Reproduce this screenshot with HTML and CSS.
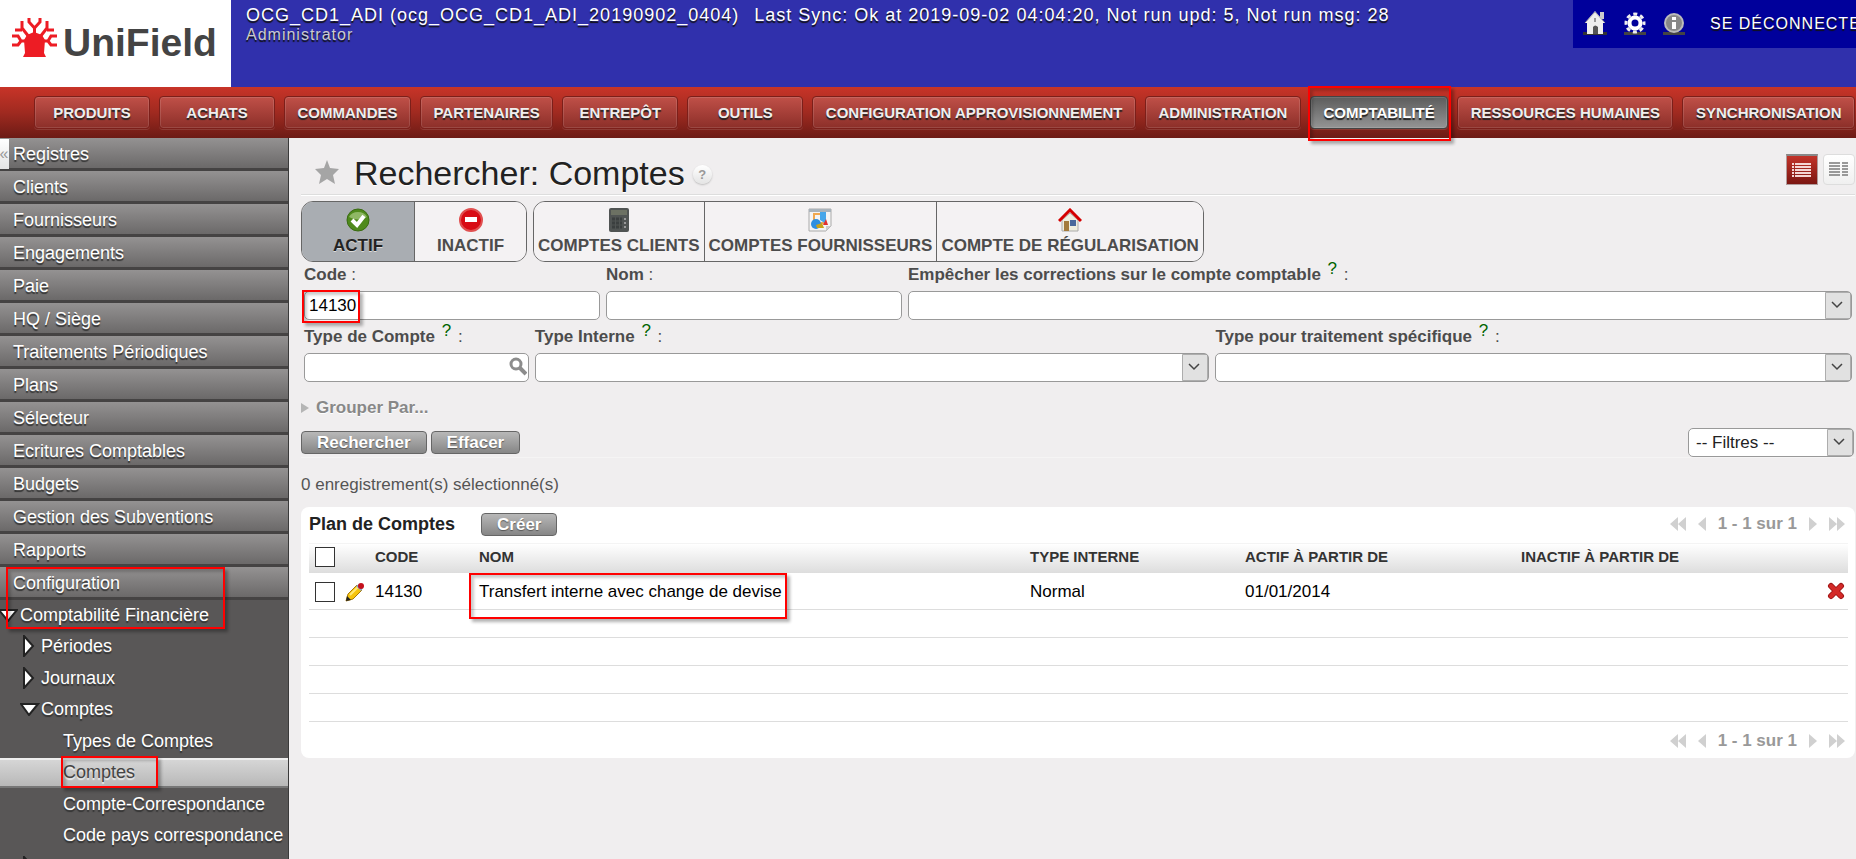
FILE: index.html
```
<!DOCTYPE html>
<html lang="fr">
<head>
    <meta charset="UTF-8">
    <meta name="viewport" content="width=device-width, initial-scale=1.0">
    <title>UniField - Comptes</title>
    <link rel="stylesheet" href="styles.css">
</head>
<body>

<header class="header">
    <a href="#" class="logo">
        <svg class="logo-tree" viewBox="0 0 45 40" width="45" height="40" aria-hidden="true">
            <path d="M12 22 L15 17 L22 14 L30 17 L33 22 L32 35 L34 39 H11 L13 35 Z" fill="#ed1c24"/>
            <g fill="none" stroke="#ed1c24" stroke-width="3">
                <path d="M22.5 16V9M17 0V4L22.5 10L28 4V0"/>
                <path d="M17 19L10 10V3M10 12L3 12"/>
                <path d="M28 19L35 10V3M35 12L42 12"/>
                <path d="M14 23H9L6 18H0M9 23L6 27H0"/>
                <path d="M31 23H36L39 18H45M36 23L39 27H45"/>
            </g>
        </svg>
        <span class="logo-text">UniField</span>
    </a>
    <div class="header-info">
        <div class="db-name"><span>OCG_CD1_ADI (ocg_OCG_CD1_ADI_20190902_0404)</span><span>Last Sync: Ok at 2019-09-02 04:04:20, Not run upd: 5, Not run msg: 28</span></div>
        <div class="user-name">Administrator</div>
    </div>
    <div class="user-menu">
        <a href="#" aria-label="Accueil">
            <svg viewBox="0 0 24 24" width="24" height="24">
                <path d="M0 21H24V24H0Z" fill="#333"/>
                <path d="M17 1H21V8H17Z" fill="#ccc"/>
                <path d="M12 0L22 12H20V23H4V12H2Z" fill="#eee"/>
                <path d="M2 12L12 1L22 12" fill="none" stroke="#aaa" stroke-width="1"/>
                <path d="M10 23V16Q12 13 15 16V23Z" fill="#555"/>
                <path d="M11 7H13V11H11Z" fill="#999"/>
            </svg>
        </a>
        <a href="#" aria-label="Préférences">
            <svg viewBox="0 0 22 24" width="22" height="24">
                <path d="M0 21H22V24H0Z" fill="#444"/>
                <circle cx="11" cy="12" r="5.5" fill="none" stroke="#fff" stroke-width="4"/>
                <circle cx="11" cy="12" r="9" fill="none" stroke="#eee" stroke-width="3" stroke-dasharray="4 3.07" stroke-dashoffset="2"/>
            </svg>
        </a>
        <a href="#" aria-label="À propos">
            <svg viewBox="0 0 22 24" width="22" height="24">
                <path d="M0 21H22V24H0Z" fill="#444"/>
                <circle cx="11" cy="12" r="9" fill="#888" stroke="#bbb" stroke-width="2"/>
                <path d="M9 6H13V9H9ZM9 11H13V18H9Z" fill="#fff"/>
            </svg>
        </a>
        <a href="#" class="logout">SE DÉCONNECTER</a>
    </div>
</header>

<nav class="main-nav">
    <a href="#" class="nav-item">PRODUITS</a>
    <a href="#" class="nav-item">ACHATS</a>
    <a href="#" class="nav-item">COMMANDES</a>
    <a href="#" class="nav-item">PARTENAIRES</a>
    <a href="#" class="nav-item">ENTREPÔT</a>
    <a href="#" class="nav-item">OUTILS</a>
    <a href="#" class="nav-item">CONFIGURATION APPROVISIONNEMENT</a>
    <a href="#" class="nav-item">ADMINISTRATION</a>
    <a href="#" class="nav-item active">COMPTABILITÉ<span class="mark mark-nav"></span></a>
    <a href="#" class="nav-item">RESSOURCES HUMAINES</a>
    <a href="#" class="nav-item">SYNCHRONISATION</a>
</nav>

<div class="page">
    <aside class="sidebar">
        <button type="button" class="collapse" aria-label="Réduire le menu">«</button>
        <a href="#" class="menu-item">Registres</a>
        <a href="#" class="menu-item">Clients</a>
        <a href="#" class="menu-item">Fournisseurs</a>
        <a href="#" class="menu-item">Engagements</a>
        <a href="#" class="menu-item">Paie</a>
        <a href="#" class="menu-item">HQ / Siège</a>
        <a href="#" class="menu-item">Traitements Périodiques</a>
        <a href="#" class="menu-item">Plans</a>
        <a href="#" class="menu-item">Sélecteur</a>
        <a href="#" class="menu-item">Ecritures Comptables</a>
        <a href="#" class="menu-item">Budgets</a>
        <a href="#" class="menu-item">Gestion des Subventions</a>
        <a href="#" class="menu-item">Rapports</a>
        <a href="#" class="menu-item marked">Configuration<span class="mark mark-config"></span></a>
        <div class="tree">
            <a href="#" class="tree-item level-1"><svg viewBox="0 0 20 14" width="20" height="14"><path d="M1 2H19L10 13Z" fill="#fff" stroke="#222" stroke-width="2"/></svg>Comptabilité Financière</a>
            <a href="#" class="tree-item level-2"><svg viewBox="0 0 20 22" width="20" height="22"><path d="M4 1V21L13 11Z" fill="#fff" stroke="#222" stroke-width="2"/></svg>Périodes</a>
            <a href="#" class="tree-item level-2"><svg viewBox="0 0 20 22" width="20" height="22"><path d="M4 1V21L13 11Z" fill="#fff" stroke="#222" stroke-width="2"/></svg>Journaux</a>
            <a href="#" class="tree-item level-2"><svg viewBox="0 0 20 14" width="20" height="14"><path d="M1 2H18L9 13Z" fill="#fff" stroke="#222" stroke-width="2"/></svg>Comptes</a>
            <a href="#" class="tree-item level-3">Types de Comptes</a>
            <a href="#" class="tree-item level-3 selected">Comptes<span class="mark mark-comptes"></span></a>
            <a href="#" class="tree-item level-3">Compte-Correspondance</a>
            <a href="#" class="tree-item level-3">Code pays correspondance</a>
            <a href="#" class="tree-item level-2" aria-label="Suite du menu"><svg viewBox="0 0 20 22" width="20" height="22"><path d="M4 1V21L13 11Z" fill="#fff" stroke="#222" stroke-width="2"/></svg></a>
        </div>
    </aside>

    <main class="content">
        <div class="title-bar">
            <svg class="star" viewBox="0 0 24 24" width="24" height="24" aria-hidden="true"><path d="M12 0L15 8L24 9L18 15L20 24L12 19L4 24L6 15L0 9L9 8Z" fill="#a5a5a5"/></svg>
            <h1>Rechercher: Comptes</h1>
            <a href="#" class="help">?</a>
            <div class="views">
                <button type="button" class="view active" aria-label="Liste">
                    <svg viewBox="0 0 20 16" width="20" height="16"><path d="M0 2H2M3 2H19M0 5H2M3 5H19M0 8H2M3 8H19M0 11H2M3 11H19M0 14H2M3 14H19" stroke="#f4d6d4" stroke-width="2"/></svg>
                </button>
                <button type="button" class="view" aria-label="Formulaire">
                    <svg viewBox="0 0 20 16" width="20" height="16"><path d="M0 2H11M13 2H19M0 5H11M13 5H19M0 8H11M13 8H19M0 11H11M13 11H19M0 14H11M13 14H19" stroke="#999" stroke-width="2"/></svg>
                </button>
            </div>
        </div>

        <form>
            <div class="toggles">
                <div class="toggle-group">
                    <button type="button" class="toggle status on">
                        <svg viewBox="0 0 24 24" width="24" height="24"><circle cx="12" cy="12" r="11" fill="#4f8a1c" stroke="#3a6b12" stroke-width="1"/><path d="M3 9A10 9 0 0 1 21 9Q12 14 3 9Z" fill="#8fb865"/><path d="M6 12L11 17L18 8" fill="none" stroke="#fff" stroke-width="4"/></svg>
                        ACTIF
                    </button>
                    <button type="button" class="toggle status">
                        <svg viewBox="0 0 24 24" width="24" height="24"><circle cx="12" cy="12" r="11" fill="#d80c14" stroke="#e05050" stroke-width="2"/><path d="M6 9H18V14H6Z" fill="#fff"/></svg>
                        INACTIF
                    </button>
                </div>
                <div class="toggle-group">
                    <button type="button" class="toggle">
                        <svg viewBox="0 0 24 24" width="24" height="24"><rect x="2" y="0" width="20" height="24" rx="2" fill="#505453"/><path d="M4 2H20V7H4Z" fill="#6c7163"/><path d="M5 11H15M5 15H15M5 19H15" stroke="#3b3f3f" stroke-width="3" stroke-dasharray="3 1"/><path d="M17 11H19M17 15H19M17 19H19" stroke="#999" stroke-width="2"/></svg>
                        COMPTES CLIENTS
                    </button>
                    <button type="button" class="toggle">
                        <svg viewBox="0 0 24 24" width="24" height="24"><path d="M1 1H23V18L18 23H1Z" fill="#f4f4f4" stroke="#aaa" stroke-width="1"/><path d="M1 1H23V4H1Z" fill="#a9b3bb"/><rect x="6" y="6" width="10" height="9" fill="none" stroke="#f0a850" stroke-width="2"/><path d="M12 4H18V16L12 12Z" fill="#46a6ea"/><circle cx="8" cy="16" r="5" fill="#2d8fe0"/><path d="M15 17L18 11L20 17Z" fill="#e03030"/><path d="M8 17L14 15L16 20H9Z" fill="#c9a21a"/><path d="M18 23V18H23Z" fill="#ccc"/></svg>
                        COMPTES FOURNISSEURS
                    </button>
                    <button type="button" class="toggle">
                        <svg viewBox="0 0 24 24" width="24" height="24"><path d="M4 12L12 5L20 12V23H4Z" fill="#eeeedf" stroke="#aaa" stroke-width="1"/><path d="M6 13H11V23H6Z" fill="#a37b3c"/><path d="M12 12H18V18H12Z" fill="#49699c"/><path d="M1 13L12 2L23 13" fill="none" stroke="#d40000" stroke-width="3"/></svg>
                        COMPTE DE RÉGULARISATION
                    </button>
                </div>
            </div>

            <div class="fields row-1">
                <div class="field marked">
                    <label for="code"><b>Code</b> :</label>
                    <input type="text" id="code" value="14130">
                    <span class="mark mark-code"></span>
                </div>
                <div class="field">
                    <label for="nom"><b>Nom</b> :</label>
                    <input type="text" id="nom">
                </div>
                <div class="field">
                    <label for="corrections"><b>Empêcher les corrections sur le compte comptable</b> <sup>?</sup> :</label>
                    <select id="corrections"><option></option></select>
                </div>
            </div>
            <div class="fields row-2">
                <div class="field">
                    <label for="type"><b>Type de Compte</b> <sup>?</sup> :</label>
                    <div class="search-box">
                        <input type="text" id="type">
                        <svg viewBox="0 0 18 20" width="18" height="20" aria-hidden="true"><circle cx="7" cy="8" r="5" fill="none" stroke="#8c8c8c" stroke-width="3"/><path d="M11 12L17 18" stroke="#8c8c8c" stroke-width="4"/></svg>
                    </div>
                </div>
                <div class="field">
                    <label for="interne"><b>Type Interne</b> <sup>?</sup> :</label>
                    <select id="interne"><option></option></select>
                </div>
                <div class="field">
                    <label for="specifique"><b>Type pour traitement spécifique</b> <sup>?</sup> :</label>
                    <select id="specifique"><option></option></select>
                </div>
            </div>

            <button type="button" class="group-by"><svg viewBox="0 0 8 10" width="8" height="10"><path d="M0 0L8 5L0 10Z" fill="#b5b5b5"/></svg>Grouper Par...</button>

            <div class="actions">
                <button type="button" class="button">Rechercher</button>
                <button type="button" class="button">Effacer</button>
                <select class="filters" aria-label="Filtres"><option>-- Filtres --</option></select>
            </div>
        </form>

        <p class="count">0 enregistrement(s) sélectionné(s)</p>

        <section class="panel">
            <div class="panel-head">
                <h2>Plan de Comptes</h2>
                <button type="button" class="button">Créer</button>
                <div class="pager">
                    <svg viewBox="0 0 16 14" width="16" height="14"><path d="M8 0V14L0 7ZM16 0V14L8 7Z"/></svg>
                    <svg viewBox="0 0 8 14" width="8" height="14"><path d="M8 0V14L0 7Z"/></svg>
                    <span>1 - 1 sur 1</span>
                    <svg viewBox="0 0 8 14" width="8" height="14"><path d="M0 0V14L8 7Z"/></svg>
                    <svg viewBox="0 0 16 14" width="16" height="14"><path d="M0 0V14L8 7ZM8 0V14L16 7Z"/></svg>
                </div>
            </div>
            <table class="grid">
                <thead>
                    <tr>
                        <th class="col-check"><input type="checkbox" aria-label="Tout sélectionner"></th>
                        <th class="col-edit"></th>
                        <th class="col-code">CODE</th>
                        <th class="col-nom">NOM</th>
                        <th class="col-type">TYPE INTERNE</th>
                        <th class="col-actif">ACTIF À PARTIR DE</th>
                        <th>INACTIF À PARTIR DE</th>
                        <th class="col-delete"></th>
                    </tr>
                </thead>
                <tbody>
                    <tr class="record">
                        <td><input type="checkbox" aria-label="Sélectionner 14130"></td>
                        <td>
                            <svg viewBox="0 0 20 20" width="20" height="20"><path d="M1 19L3 12L12 3L17 8L8 17Z" fill="#f6c40c" stroke="#a8790a" stroke-width="1"/><path d="M5 13L13 5" stroke="#ffe97a" stroke-width="2"/><path d="M1 19L2 14L6 18Z" fill="#222"/><path d="M11 4L14 2L18 6L16 9Z" fill="#86a8cc"/><circle cx="16" cy="4" r="3" fill="#c4101c"/></svg>
                        </td>
                        <td>14130</td>
                        <td class="marked">Transfert interne avec change de devise<span class="mark mark-nom"></span></td>
                        <td>Normal</td>
                        <td>01/01/2014</td>
                        <td></td>
                        <td>
                            <button type="button" class="delete" aria-label="Supprimer"><svg viewBox="0 0 18 18" width="18" height="18"><path d="M4 4L14 14M14 4L4 14" stroke="#a01818" stroke-width="6" stroke-linecap="round"/><path d="M4 4L14 14M14 4L4 14" stroke="#d42a28" stroke-width="4" stroke-linecap="round"/></svg></button>
                        </td>
                    </tr>
                    <tr><td colspan="8"></td></tr>
                    <tr><td colspan="8"></td></tr>
                    <tr><td colspan="8"></td></tr>
                    <tr><td colspan="8"></td></tr>
                </tbody>
            </table>
            <div class="panel-foot">
                <div class="pager">
                    <svg viewBox="0 0 16 14" width="16" height="14"><path d="M8 0V14L0 7ZM16 0V14L8 7Z"/></svg>
                    <svg viewBox="0 0 8 14" width="8" height="14"><path d="M8 0V14L0 7Z"/></svg>
                    <span>1 - 1 sur 1</span>
                    <svg viewBox="0 0 8 14" width="8" height="14"><path d="M0 0V14L8 7Z"/></svg>
                    <svg viewBox="0 0 16 14" width="16" height="14"><path d="M0 0V14L8 7ZM8 0V14L16 7Z"/></svg>
                </div>
            </div>
        </section>
    </main>
</div>

</body>
</html>
```

FILE: styles.css
```
* {
    box-sizing: border-box;
}

body {
    margin: 0;
    height: 100vh;
    display: flex;
    flex-direction: column;
    overflow: hidden;
    background: #f0eeef;
    color: #4c4c4c;
    font: 17px/24px "Liberation Sans", Arial, sans-serif;
}

a {
    color: inherit;
    text-decoration: none;
}

button, input, select {
    font: inherit;
    color: inherit;
}

svg {
    display: block;
    flex: none;
}

/* header */
.header {
    display: flex;
    flex: none;
    align-items: flex-start;
    height: 87px;
    background: #3030ac;
    color: #fff;
    letter-spacing: 1px;
    white-space: nowrap;
    text-shadow: 0 2px 1px #111;
}

.logo {
    display: flex;
    gap: 6px;
    width: 231px;
    height: 87px;
    padding: 18px 0 0 12px;
    background: #fff;
    color: #444;
    letter-spacing: normal;
    text-shadow: none;
}

.logo-text {
    font-size: 39px;
    font-weight: bold;
    line-height: 50px;
}

.header-info {
    flex: 1;
    padding: 5px 0 0 15px;
    line-height: 20px;
}

.db-name {
    display: flex;
    gap: 15px;
    font-size: 18px;
}

.user-name {
    color: #ccc;
    font-size: 16px;
}

.user-menu {
    display: flex;
    align-items: center;
    gap: 17px;
    width: 283px;
    height: 48px;
    padding: 0 0 3px 10px;
    overflow: hidden;
    background: #00009b;
    font-size: 16px;
}

.logout {
    padding: 3px 0 0 8px;
}

/* main navigation */
.main-nav {
    display: flex;
    flex: none;
    gap: 9px;
    height: 51px;
    padding: 9px 1px 9px 34px;
    background: linear-gradient(#c83428, #a02a20 50%, #6c1b15);
    white-space: nowrap;
}

.nav-item {
    position: relative;
    flex: 1 0 auto;
    min-width: 116px;
    padding: 0 12px;
    border: 1px solid #7c1f1a;
    border-radius: 4px;
    background: linear-gradient(#c05048, #8c2f29);
    box-shadow: inset 0 0 0 1px rgba(255, 255, 255, 0.12), 0 1px 0 rgba(255, 255, 255, 0.12);
    color: #eee;
    font-size: 15px;
    font-weight: bold;
    line-height: 31px;
    text-align: center;
    text-shadow: 0 2px 1px #222;
}

.nav-item.active {
    border-color: #444;
    background: linear-gradient(#5c5c5c, #949494);
    color: #fff;
}

/* red frames around the steps to follow */
.marked {
    position: relative;
}

.mark {
    position: absolute;
    z-index: 2;
    border: 2px solid #f00;
    box-shadow: 3px 3px 3px rgba(0, 0, 0, 0.3), inset 3px 3px 3px rgba(0, 0, 0, 0.2);
    pointer-events: none;
}

.mark-nav {
    inset: -11px -4px -13px -3px;
}

.mark-config {
    top: 0;
    left: 6px;
    width: 219px;
    height: 62px;
}

.mark-comptes {
    top: -2px;
    left: 61px;
    width: 97px;
    height: 32px;
}

.mark-code {
    top: 28px;
    left: -2px;
    width: 58px;
    height: 33px;
}

.mark-nom {
    top: 0;
    left: -10px;
    width: 318px;
    height: 46px;
}

/* sidebar */
.page {
    display: flex;
    flex: 1;
    min-height: 0;
}

.sidebar {
    position: relative;
    flex: none;
    width: 289px;
    border-right: 1px solid #3a3a3a;
    background: #595757;
    color: #fff;
    font-size: 18px;
    white-space: nowrap;
    text-shadow: 0 2px 1px #333;
}

.collapse {
    position: absolute;
    top: 1px;
    left: 0;
    width: 9px;
    height: 30px;
    padding: 0;
    border: 0;
    background: linear-gradient(#fff, #e4e4e4);
    color: #999;
    font-size: 16px;
    line-height: 26px;
    text-indent: -1px;
}

.menu-item {
    display: block;
    height: 33px;
    padding-left: 13px;
    border-bottom: 3px solid #454343;
    background: linear-gradient(#949292, #6b6969);
    line-height: 32px;
}

.tree {
    display: grid;
    grid-auto-rows: 31px 32px;
}

.tree-item {
    display: flex;
    align-items: center;
    padding-bottom: 2px;
}

.tree-item svg {
    margin-right: 1px;
}

.level-1 svg {
    margin: 0 2px 0 -2px;
}

.level-2 {
    padding-left: 20px;
}

.level-3 {
    padding-left: 63px;
}

.tree-item.selected {
    position: relative;
    height: 30px;
    margin-top: 1px;
    padding-bottom: 0;
    border-bottom: 2px solid #777;
    background: linear-gradient(#d8d8d8, #b8b8b8);
    box-shadow: inset 0 2px 0 #eee;
    color: #444;
    text-shadow: 0 2px 1px #eee;
}

/* content */
.content {
    flex: 1;
    min-width: 0;
    padding: 0 1px 0 12px;
}

.title-bar {
    display: flex;
    align-items: center;
    height: 57px;
    padding: 0 0 0 14px;
    border-bottom: 1px solid #ddd;
    box-shadow: 0 1px 0 #fff;
}

h1 {
    margin: 14px 8px 0 15px;
    color: #222;
    font-size: 34px;
    font-weight: normal;
    line-height: 40px;
    text-shadow: 0 1px 0 #fff;
}

.star {
    margin-top: 12px;
}

.help {
    width: 19px;
    height: 19px;
    margin-top: 16px;
    border-radius: 50%;
    background: linear-gradient(#fff, #e4e4e4);
    box-shadow: 0 1px 2px #bbb;
    color: #999;
    font-size: 13px;
    font-weight: bold;
    line-height: 19px;
    text-align: center;
}

.views {
    display: flex;
    gap: 5px;
    margin: 6px 0 0 auto;
}

.view {
    display: flex;
    align-items: center;
    justify-content: center;
    width: 32px;
    height: 31px;
    padding: 0;
    border: 1px solid #ddd;
    border-radius: 4px;
    background: linear-gradient(#fff, #f0f0f0);
}

.view.active {
    border: 1px solid #b09c9c;
    border-top: 2px solid #888;
    border-radius: 0;
    background: linear-gradient(#c23329, #7c1712);
}

.toggles {
    display: flex;
    gap: 6px;
    margin-top: 6px;
}

.toggle-group {
    display: flex;
    overflow: hidden;
    border: 1px solid #666;
    border-radius: 12px;
}

.toggle {
    display: flex;
    flex-direction: column;
    align-items: center;
    gap: 2px;
    height: 59px;
    padding: 6px 4px 0;
    border: 0;
    background: #f4f2f3;
    font-weight: bold;
}

.toggle + .toggle {
    border-left: 1px solid #666;
}

.toggle.status {
    width: 112px;
}

.toggle.on {
    background: #a9adb2;
    color: #222;
    text-shadow: 0 1px 0 #ddd;
}

.fields {
    display: grid;
    gap: 6px;
    margin-bottom: 4px;
    padding: 0 3px;
}

.row-1 {
    grid-template-columns: 296fr 296fr 944fr;
}

.row-2 {
    grid-template-columns: 225fr 675fr 637fr;
}

.field label {
    display: block;
    padding: 1px 0 4px;
}

sup {
    margin: 0 2px;
    color: #006400;
    font-size: 17px;
    line-height: 0;
    vertical-align: 6px;
}

input[type="text"], select {
    display: block;
    width: 100%;
    height: 29px;
    padding: 0 4px;
    border: 1px solid #999;
    border-radius: 5px;
    background: #fff;
    color: #000;
}

select {
    appearance: none;
    background: #fff url("data:image/svg+xml,%3Csvg xmlns='http://www.w3.org/2000/svg' width='26' height='27'%3E%3Cpath d='M.5 .5H25.5V26.5H.5Z' fill='%23e1e1e1' stroke='%23adadad'/%3E%3Cpath d='M7 10L12 15L17 10' fill='none' stroke='%23444' stroke-width='1.5'/%3E%3C/svg%3E") no-repeat right center;
}

.search-box {
    position: relative;
}

.search-box svg {
    position: absolute;
    top: 3px;
    right: 2px;
}

.group-by {
    display: flex;
    align-items: center;
    gap: 7px;
    margin-top: 14px;
    padding: 0;
    border: 0;
    background: none;
    color: #888;
    font-weight: bold;
    text-shadow: 0 1px 0 #fff;
}

.actions {
    display: flex;
    align-items: center;
    gap: 4px;
    margin-top: 8px;
    border-bottom: 1px solid #f5f4f4;
}

.button {
    height: 23px;
    padding: 0 15px;
    border: 1px solid #666;
    border-radius: 4px;
    background: linear-gradient(#b8b8b8, #868686);
    color: #fff;
    font-weight: bold;
    line-height: 21px;
    text-shadow: 0 1px 1px #555;
}

.filters {
    width: 166px;
    margin: 0 1px 0 auto;
    padding: 0 7px;
    color: #222;
}

.count {
    margin: 15px 0 10px;
    color: #555;
}

/* list of accounts */
.panel {
    padding: 0 7px 0 8px;
    border-radius: 8px;
    background: #fff;
}

.panel-head, .panel-foot {
    display: flex;
    align-items: center;
    height: 36px;
}

.panel-head {
    padding-bottom: 2px;
}

.panel-foot {
    padding-top: 2px;
}

h2 {
    margin: 0 26px 0 0;
    color: #222;
    font-size: 18px;
}

.pager {
    display: flex;
    align-items: center;
    gap: 12px;
    margin-left: auto;
    padding-right: 3px;
    color: #999;
    font-weight: bold;
}

.pager svg {
    fill: #d0d0d0;
}

.grid {
    width: 100%;
    table-layout: fixed;
    border-spacing: 0;
    color: #000;
}

th, td {
    height: 28px;
    padding: 0;
    border-bottom: 1px solid #ddd;
    text-align: left;
}

th {
    height: 30px;
    padding-bottom: 3px;
    border-top: 1px solid #f4f4f4;
    border-bottom: 0;
    background: linear-gradient(#fff, #ddd);
    color: #333;
    font-size: 15px;
    line-height: 20px;
}

.record td {
    height: 37px;
    padding-top: 2px;
}

.col-check { width: 36px; }
.col-edit { width: 30px; }
.col-code { width: 104px; }
.col-nom { width: 551px; }
.col-type { width: 215px; }
.col-actif { width: 276px; }
.col-delete { width: 21px; }

input[type="checkbox"] {
    appearance: none;
    display: block;
    width: 20px;
    height: 20px;
    margin: 0 0 0 6px;
    border: 1px solid #333;
    background: #fff;
}

.delete {
    display: block;
    padding: 0 0 3px;
    border: 0;
    background: none;
}
```
